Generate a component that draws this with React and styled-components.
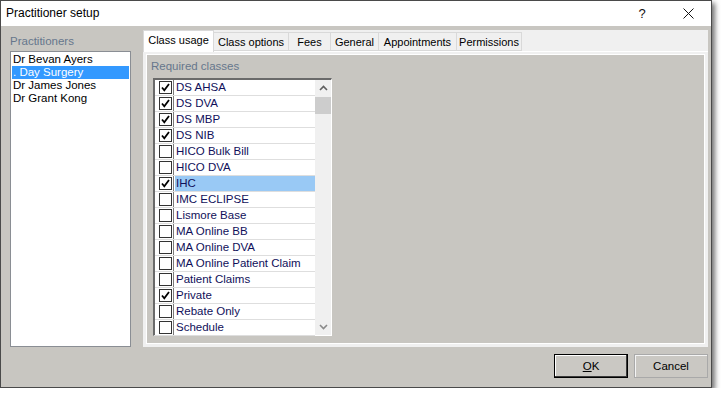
import React from "react";
import styled, { createGlobalStyle } from "styled-components";

const Global = createGlobalStyle`
  html, body { margin: 0; padding: 0; background: #ffffff; }
  body { font-family: "Liberation Sans", Arial, sans-serif; font-size: 11px; color: #000; }
  * { box-sizing: border-box; }
`;

const Window = styled.div`
  width: 712px;
  height: 388px;
  border: 1px solid #4a4a4a;
  box-shadow: 3px 3px 5px rgba(0, 0, 0, 0.55);
  display: flex;
  flex-direction: column;
  background: #c8c6c1;
`;

const TitleBar = styled.div`
  height: 25px;
  background: #ffffff;
  display: flex;
  align-items: center;
  padding-left: 5px;
`;

const TitleText = styled.div`
  flex: 1;
  font-size: 12px;
  line-height: 25px;
  color: #000;
`;

const TitleButton = styled.div`
  width: 46px;
  height: 25px;
  display: flex;
  align-items: center;
  justify-content: center;
  font-size: 13px;
  color: #111;
`;

const Body = styled.div`
  flex: 1;
  display: flex;
  flex-direction: column;
  padding: 4px 3px 0 9px;
`;

const Main = styled.div`
  height: 317px;
  display: flex;
  gap: 12px;
`;

const LeftColumn = styled.div`
  width: 121px;
  display: flex;
  flex-direction: column;
`;

const GroupLabel = styled.div`
  line-height: 13px;
  padding-top: ${(p) => p.$top}px;
  margin-bottom: ${(p) => p.$bottom}px;
  color: #66768c;
  font-size: 11.5px;
`;

const ListBox = styled.div`
  flex: 1;
  background: #fff;
  border: 1px solid #8a8e94;
  padding: 1px;
`;

const ListItem = styled.div`
  line-height: 13px;
  height: 13px;
  padding-left: 1px;
  white-space: nowrap;
  font-size: 11.5px;
  background: ${(p) => (p.$selected ? "#3399ff" : "transparent")};
  color: ${(p) => (p.$selected ? "#fff" : "#000")};
`;

const TabControl = styled.div`
  flex: 1;
  display: flex;
  flex-direction: column;
  background: #f0f0f0;
`;

const TabStrip = styled.div`
  height: 21px;
  display: flex;
  align-items: flex-end;
  position: relative;
  z-index: 1;
`;

const Tab = styled.div`
  width: ${(p) => p.$w}px;
  height: ${(p) => (p.$active ? 22 : 19)}px;
  margin-bottom: ${(p) => (p.$active ? -1 : 0)}px;
  margin-left: ${(p) => (p.$active ? 0 : -1)}px;
  text-align: center;
  line-height: ${(p) => (p.$active ? 19 : 18)}px;
  background: ${(p) => (p.$active ? "#fff" : "#f0f0f0")};
  border: 1px solid #d9d9d9;
  border-bottom: ${(p) => (p.$active ? "none" : "1px solid #d9d9d9")};
  white-space: nowrap;
  font-size: 11px;
  color: #000;
`;

const Page = styled.div`
  flex: 1;
  border-top: 1px solid #ffffff;
  padding: 2px 3px 3px 3px;
  display: flex;
`;

const Panel = styled.div`
  flex: 1;
  border: 1px solid #ffffff;
  background: #c8c6c1;
  display: flex;
  flex-direction: column;
  padding-left: 4px;
`;

const CheckList = styled.div`
  margin-left: 2px;
  width: 179px;
  height: 258px;
  display: flex;
  background: #fff;
  border-top: 2px solid #6a6a6a;
  border-left: 2px solid #6a6a6a;
  border-right: 1px solid #ffffff;
  border-bottom: 1px solid #ffffff;
`;

const Rows = styled.div`
  flex: 1;
  display: flex;
  flex-direction: column;
`;

const Row = styled.div`
  height: 16px;
  display: flex;
  border-bottom: 1px solid #dedede;
`;

const CheckCell = styled.div`
  width: 19px;
  border-right: 1px solid #7a7a7a;
  display: flex;
  align-items: center;
  padding-left: 4px;
`;

const Box = styled.div`
  width: 13px;
  height: 13px;
  border: 1px solid #333;
  background: #fff;
  display: flex;
  align-items: center;
  justify-content: center;
`;

const TextCell = styled.div`
  flex: 1;
  margin-left: 1px;
  padding-left: 1px;
  line-height: 15px;
  white-space: nowrap;
  font-size: 11.5px;
  color: #10105a;
  background: ${(p) => (p.$selected ? "#99c9f5" : "transparent")};
`;

const ScrollBar = styled.div`
  width: 16px;
  background: #f0f0f0;
  display: flex;
  flex-direction: column;
`;

const ScrollArrow = styled.div`
  height: 16px;
  display: flex;
  align-items: center;
  justify-content: center;
`;

const Thumb = styled.div`
  height: 17px;
  margin: 1px 0 0 0;
  background: #cdcdcd;
`;

const Track = styled.div`
  flex: 1;
`;

const Footer = styled.div`
  margin-top: 7px;
  display: flex;
  justify-content: flex-end;
  gap: 6px;
`;

const Button = styled.div`
  width: 74px;
  height: 24px;
  display: flex;
  align-items: center;
  justify-content: center;
  font-size: 11.5px;
  background: #cac8c3;
  border: 1px solid ${(p) => (p.$default ? "#000" : "#a9a9a9")};
  box-shadow: ${(p) =>
    p.$default ? "inset -1px -1px 0 #3a3a3a, inset 1px 1px 0 #fff" : "inset 1px 1px 0 #f4f4f4"};
  color: #000;
`;

const Check = () => (
  <svg width="11" height="11" viewBox="0 0 11 11">
    <path d="M2 5.5 L4.3 8.3 L9 2" fill="none" stroke="#000" strokeWidth="1.8" />
  </svg>
);

const Chevron = ({ down }) => (
  <svg width="9" height="6" viewBox="0 0 9 6">
    <path
      d={down ? "M1 1 L4.5 4.5 L8 1" : "M1 5 L4.5 1.5 L8 5"}
      fill="none"
      stroke={down ? "#8a8a8a" : "#5f5f5f"}
      strokeWidth="1.6"
    />
  </svg>
);

const practitioners = ["Dr Bevan Ayers", ". Day Surgery", "Dr James Jones", "Dr Grant Kong"];

const tabs = [
  ["Class usage", 71],
  ["Class options", 76],
  ["Fees", 43],
  ["General", 49],
  ["Appointments", 79],
  ["Permissions", 66],
];

const classes = [
  ["DS AHSA", true],
  ["DS DVA", true],
  ["DS MBP", true],
  ["DS NIB", true],
  ["HICO Bulk Bill", false],
  ["HICO DVA", false],
  ["IHC", true],
  ["IMC ECLIPSE", false],
  ["Lismore Base", false],
  ["MA Online BB", false],
  ["MA Online DVA", false],
  ["MA Online Patient Claim", false],
  ["Patient Claims", false],
  ["Private", true],
  ["Rebate Only", false],
  ["Schedule", false],
];

export default function App() {
  return (
    <>
      <Global />
      <Window>
        <TitleBar>
          <TitleText>Practitioner setup</TitleText>
          <TitleButton>?</TitleButton>
          <TitleButton>
            <svg width="11" height="11" viewBox="0 0 11 11">
              <path d="M0.5 0.5 L10.5 10.5 M10.5 0.5 L0.5 10.5" stroke="#111" strokeWidth="1" />
            </svg>
          </TitleButton>
        </TitleBar>
        <Body>
          <Main>
            <LeftColumn>
              <GroupLabel $top={5} $bottom={3}>Practitioners</GroupLabel>
              <ListBox>
                {practitioners.map((p, i) => (
                  <ListItem key={p} $selected={i === 1}>
                    {p}
                  </ListItem>
                ))}
              </ListBox>
            </LeftColumn>
            <TabControl>
              <TabStrip>
                {tabs.map(([t, w], i) => (
                  <Tab key={t} $w={w} $active={i === 0}>
                    {t}
                  </Tab>
                ))}
              </TabStrip>
              <Page>
                <Panel>
                  <GroupLabel $top={5} $bottom={5}>Required classes</GroupLabel>
                  <CheckList>
                    <Rows>
                      {classes.map(([name, checked], i) => (
                        <Row key={name}>
                          <CheckCell>
                            <Box>{checked && <Check />}</Box>
                          </CheckCell>
                          <TextCell $selected={i === 6}>{name}</TextCell>
                        </Row>
                      ))}
                    </Rows>
                    <ScrollBar>
                      <ScrollArrow>
                        <Chevron />
                      </ScrollArrow>
                      <Thumb />
                      <Track />
                      <ScrollArrow>
                        <Chevron down />
                      </ScrollArrow>
                    </ScrollBar>
                  </CheckList>
                </Panel>
              </Page>
            </TabControl>
          </Main>
          <Footer>
            <Button $default>
              <span>
                <u>O</u>K
              </span>
            </Button>
            <Button>Cancel</Button>
          </Footer>
        </Body>
      </Window>
    </>
  );
}
